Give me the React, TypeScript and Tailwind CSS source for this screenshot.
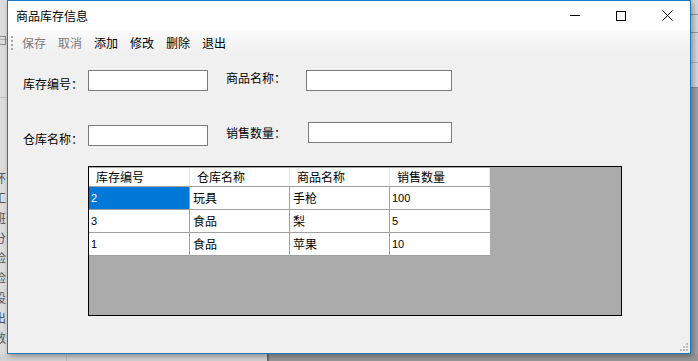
import React from 'react';

const cjk = { fontFamily: '"Noto Sans CJK SC", "Microsoft YaHei", sans-serif' };
const sans = { fontFamily: '"Liberation Sans", Arial, sans-serif' };

const rows = [
  { id: '2', store: '玩具', name: '手枪', qty: '100' },
  { id: '3', store: '食品', name: '梨', qty: '5' },
  { id: '1', store: '食品', name: '苹果', qty: '10' },
];

const behind = ['环', '工', '班', '分', '检', '检', '设', '出', '数'];

function TextBox({ className }: { className: string }) {
  return <div className={`h-[21px] bg-white border border-[#7a7a7a] ${className}`} />;
}

export default function App() {
  return (
    <div className="relative w-[698px] h-[361px] overflow-hidden bg-[#d4d4d4]" style={cjk}>
      {/* Window behind, left edge */}
      <div className="absolute left-0 top-0 w-[7px] h-[361px] overflow-hidden bg-[#dcdcdc]">
        <div className="absolute left-0 top-[39px] w-[7px] h-px bg-[#b0b0b0]" />
        <div className="absolute -left-[4px] top-[36px] w-[10px] h-[9px] border border-[#8a8a8a]" />
        <div className="absolute left-0 top-[97px] w-[7px] h-px bg-[#c4c4c4]" />
        <div className="absolute -left-[6px] top-[168px] flex flex-col text-[12px] leading-[20px] text-[#555]">
          {behind.map((c, i) => (
            <span key={i}>{c}</span>
          ))}
        </div>
      </div>
      {/* Window behind, right edge */}
      <div className="absolute left-[691px] top-0 w-[7px] h-[361px] bg-[#a0a0a0]">
        <div className="h-[88px] bg-[#d8d8d8] border-b border-[#8c8c8c]" />
        <div className="absolute left-0 top-[14px] w-[7px] h-px bg-[#9a9a9a]" />
        <div className="absolute left-0 top-[32px] w-[7px] h-px bg-[#9a9a9a]" />
        <div className="absolute left-0 top-[62px] w-[7px] h-px bg-[#b4b4b4]" />
      </div>
      {/* Bottom strip */}
      <div className="absolute left-0 top-[354px] w-[698px] h-[7px] flex">
        <div className="w-[67px] bg-[#d2d2d2] border-r border-[#bdbdbd]" />
        <div className="w-[200px] bg-[#d0d0d0]" />
        <div className="w-[2px] bg-[#6d6d6d]" />
        <div className="flex-1 bg-[#979797]" />
      </div>

      {/* Main window */}
      <div className="absolute left-[7px] top-0 w-[684px] h-[354px] border border-[#1a78c2] bg-[#f0f0f0] flex flex-col shadow-[2px_2px_6px_rgba(0,0,0,0.35)]">
        {/* Title bar */}
        <div className="h-[29px] bg-white flex items-center shrink-0">
          <span className="ml-[8px] text-[12px] text-black">商品库存信息</span>
          <div className="ml-auto flex h-full">
            <div className="w-[46px] h-full flex items-center justify-center">
              <div className="w-[10px] h-px bg-black" />
            </div>
            <div className="w-[46px] h-full flex items-center justify-center">
              <div className="w-[10px] h-[10px] border border-black" />
            </div>
            <div className="w-[46px] h-full flex items-center justify-center">
              <svg width="11" height="11" viewBox="0 0 11 11">
                <path d="M0.5 0.5 L10.5 10.5 M10.5 0.5 L0.5 10.5" stroke="#000" strokeWidth="1" />
              </svg>
            </div>
          </div>
        </div>

        {/* Toolbar */}
        <div className="h-[25px] shrink-0 flex items-center bg-gradient-to-b from-[#fbfbfb] to-[#efefef] text-[12px]">
          <div className="ml-[3px] flex flex-col gap-[2px]">
            {[0, 1, 2, 3].map((i) => (
              <div key={i} className="w-[2px] h-[2px] bg-[#a8a8a8]" />
            ))}
          </div>
          <div className="ml-[9px] flex gap-[12px]">
            <span className="text-[#7a7a7a]">保存</span>
            <span className="text-[#7a7a7a]">取消</span>
            <span className="text-black">添加</span>
            <span className="text-black">修改</span>
            <span className="text-black">删除</span>
            <span className="text-black">退出</span>
          </div>
        </div>

        {/* Form */}
        <div className="pt-[15px] text-[12px] leading-[16px] text-black">
          <div className="flex items-start">
            <span className="ml-[15px] mt-[6px] w-[65px]">库存编号：</span>
            <TextBox className="w-[120px]" />
            <span className="ml-[18px] w-[80px]">商品名称：</span>
            <TextBox className="w-[146px]" />
          </div>
          <div className="flex items-start mt-[30px]">
            <span className="ml-[15px] mt-[9px] w-[65px]">仓库名称：</span>
            <TextBox className="w-[120px] mt-[3px]" />
            <span className="ml-[18px] mt-[3px] w-[82px]">销售数量：</span>
            <TextBox className="w-[144px]" />
          </div>

          {/* Data grid */}
          <div className="ml-[80px] mt-[19px] w-[534px] h-[150px] border border-black bg-[#ababab] pt-px">
            <div className="w-[401px] flex bg-white h-[19px] border-b border-[#a0a0a0]">
              {['库存编号', '仓库名称', '商品名称', '销售数量'].map((h, i) => (
                <div
                  key={h}
                  className={`${i === 0 ? 'w-[101px]' : 'w-[100px]'} pl-[7px] border-r border-[#e3e3e3] leading-[18px]`}
                >
                  {h}
                </div>
              ))}
            </div>
            {rows.map((r, i) => (
              <div key={r.id} className="w-[401px] flex h-[23px] bg-white border-b border-[#a0a0a0] leading-[22px]">
                <div
                  className={`w-[101px] pl-[2px] border-r border-[#a0a0a0] text-[11px] ${i === 0 ? 'bg-[#0078d7] text-white' : ''}`}
                  style={sans}
                >
                  {r.id}
                </div>
                <div className="w-[100px] pl-[3px] border-r border-[#a0a0a0]">{r.store}</div>
                <div className="w-[100px] pl-[3px] border-r border-[#a0a0a0]">{r.name}</div>
                <div className="w-[100px] pl-[2px] text-[11px]" style={sans}>
                  {r.qty}
                </div>
              </div>
            ))}
          </div>
        </div>

        {/* Resize grip */}
        <div className="mt-auto ml-auto mr-[2px] mb-[2px] grid grid-cols-3 gap-px w-[8px]">
          <div />
          <div />
          <div className="w-[2px] h-[2px] bg-[#bdbdbd]" />
          <div />
          <div className="w-[2px] h-[2px] bg-[#bdbdbd]" />
          <div className="w-[2px] h-[2px] bg-[#bdbdbd]" />
          <div className="w-[2px] h-[2px] bg-[#bdbdbd]" />
          <div className="w-[2px] h-[2px] bg-[#bdbdbd]" />
          <div className="w-[2px] h-[2px] bg-[#bdbdbd]" />
        </div>
      </div>
    </div>
  );
}
